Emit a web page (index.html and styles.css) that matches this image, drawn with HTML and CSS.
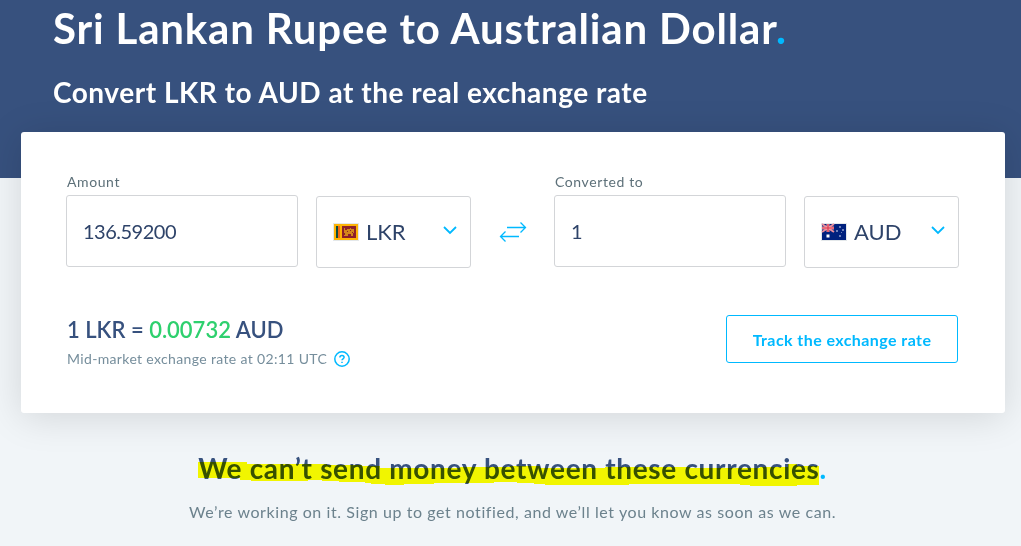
FILE: index.html
```html
<!DOCTYPE html>
<html lang="en">
<head>
<meta charset="utf-8">
<title>Sri Lankan Rupee to Australian Dollar</title>
<link rel="stylesheet" href="styles.css">
</head>
<body>
<header class="hero">
  <h1 class="hero-title">Sri Lankan Rupee to Australian Dollar<span class="dot">.</span></h1>
  <h2 class="hero-subtitle">Convert LKR to AUD at the real exchange rate</h2>
</header>
<main class="card">
  <div class="converter">
    <div class="field">
      <label class="label">Amount</label>
      <div class="input">136.59200</div>
    </div>
    <div class="select">
      <svg class="flag" viewBox="0 0 26 18" width="26" height="18">
        <rect width="26" height="18" fill="#e4e8ea"/>
        <rect x="1" y="1" width="24" height="16" fill="#fdb405"/>
        <rect x="3" y="3" width="2" height="12" fill="#0b4d40"/>
        <rect x="5" y="3" width="2" height="12" fill="#f26a12"/>
        <rect x="9" y="3" width="14" height="12" fill="#8d2029"/>
        <path d="M11 5h1v2h2v-1h3v-1h1v1h3v4h-1v3h-2v-2h-3v2h-4v-1h1v-2h-1z" fill="#d3871a"/>
        <path d="M14 8h1v1h-1zM17 7h1v1h-1zM19 9h1v1h-1z" fill="#8d2029"/>
      </svg>
      <span class="code">LKR</span>
      <svg class="chevron" viewBox="0 0 14 9" width="14" height="9"><path d="M1 1l6 6 6-6"/></svg>
    </div>
    <svg class="swap" viewBox="0 0 28 20" width="28" height="20"><path d="M8 5.500h18.500M21.500.5l5 5-5 5M20 14.500H1.500M6.500 9.500l-5 5 5 5"/></svg>
    <div class="field">
      <label class="label">Converted to</label>
      <div class="input">1</div>
    </div>
    <div class="select">
      <svg class="flag" viewBox="0 0 26 18" width="26" height="18">
        <rect width="26" height="18" fill="#e4e8ea"/>
        <rect x="1" y="1" width="24" height="16" fill="#00217e"/>
        <path d="M1 1l12 8M13 1L1 9" stroke="#e88d9c" stroke-width="2"/>
        <path d="M7 1v8M1 5h12" stroke="#f09aa4" stroke-width="3"/>
        <path d="M7 1v8M1 5h12" stroke="#e0384e" stroke-width="1.200"/>
        <rect x="5.500" y="11.500" width="3" height="3" fill="#fff"/>
        <path d="M18 3h2v2h-2zM15 7h2v2h-2zM21 6h2v2h-2zM18 12h2v2h-2zM20 9h1v1h-1z" fill="#6d80b8"/>
      </svg>
      <span class="code">AUD</span>
      <svg class="chevron" viewBox="0 0 14 9" width="14" height="9"><path d="M1 1l6 6 6-6"/></svg>
    </div>
  </div>
  <div class="summary">
    <div class="rate">
      <p class="rate-value">1 LKR = <span class="green">0.00732</span> AUD</p>
      <p class="rate-note">Mid-market exchange rate at 02:11 UTC
        <svg class="help" viewBox="0 0 16 16" width="16" height="16"><circle cx="8" cy="8" r="7.200"/><path d="M5.900 6.500C5.900 5.200 6.800 4.400 8 4.400s2.100.800 2.100 1.900c0 1.500-2.100 1.500-2.100 3M8 10.700v1.400"/></svg>
      </p>
    </div>
    <button class="track">Track the exchange rate</button>
  </div>
</main>
<section class="notice">
  <h3 class="notice-title"><span class="marked">We can’t send money between these currencies<span class="dot">.</span>
    <svg class="marker" viewBox="198 460 622 28" width="622" height="28"><path d="M198 462H247V464H327V465H362V466H380V468H460V467H510V466H540V468H605V467H690V468H760V467H788V464H797V466H819V485H797V486H750V485H740V484H629V485H545V484H534V483H517V482H494V483H434V484H404V485H385V484H371V483H365V482H339V481H322V480H308V481H251V480H240V478H198Z"/></svg></span></h3>
  <p class="notice-text">We’re working on it. Sign up to get notified, and we’ll let you know as soon as we can.</p>
</section>
</body>
</html>
```
FILE: styles.css
```css
* { box-sizing: border-box; }
body { margin: 0; background: #f1f5f8; font-family: Lato, "Liberation Sans", sans-serif; color: #37517e; }
h1, h2, h3, p { margin: 0; }
.dot { color: #00b9ff; }
.hero { height: 178px; padding: 2px 53px 0; background: #37517e; color: #fff; }
.hero-title { font-size: 42px; line-height: 52px; font-weight: 700; letter-spacing: .83px; white-space: nowrap; }
.hero-subtitle { margin-top: 21px; font-size: 28px; line-height: 34px; font-weight: 700; letter-spacing: .53px; }
.card { position: relative; width: 984px; height: 281px; margin: -46px 0 0 21px; padding: 41px 46px 0 45px; background: #fff; border-radius: 3px; box-shadow: 0 4px 38px rgba(0, 0, 0, .13); }
.converter { display: flex; align-items: flex-end; }
.field { width: 232px; }
.label { display: block; height: 22px; padding-left: 1px; font-size: 14px; line-height: 18px; letter-spacing: .6px; color: #5d7079; }
.input { height: 72px; padding: 0 16px; border: 1px solid #d3d5d8; border-radius: 3px; font-size: 20px; line-height: 70px; letter-spacing: -.5px; color: #2e4369; }
.select { display: flex; align-items: center; width: 155px; height: 72px; margin: 0 0 -1px 18px; padding: 0 13px 0 16px; border: 1px solid #d3d5d8; border-radius: 3px; color: #2e4369; font-size: 22px; }
.code { margin: 0 0 2px 7px; }
.chevron { margin: 0 0 4px auto; fill: none; stroke: #00b9ff; stroke-width: 1.8; }
.swap { margin: 0 27px 25px 28px; fill: none; stroke: #00b9ff; stroke-width: 1.3; }
.summary { display: flex; justify-content: space-between; margin-top: 48px; }
.rate { padding: 1px 0 0 1px; }
.rate-value { font-size: 22px; line-height: 28px; font-weight: 600; }
.green { color: #2ed06e; }
.rate-note { display: flex; align-items: center; margin-top: 5px; font-size: 14px; line-height: 20px; letter-spacing: .35px; color: #768e9c; }
.help { margin-left: 7px; fill: none; stroke: #00b9ff; stroke-width: 1.5; }
.track { width: 232px; height: 48px; margin-right: 1px; padding: 0; border: 1px solid #00b9ff; border-radius: 3px; background: #fff; color: #00b9ff; font: 700 16px Lato, sans-serif; letter-spacing: .43px; }
.notice { padding: 37px 0 0 4px; text-align: center; }
.notice-title { font-size: 28px; font-weight: 700; line-height: 36px; letter-spacing: .67px; }
.marked { position: relative; display: inline-block; }
.marker { position: absolute; left: 0; top: 10px; fill: #ff0; mix-blend-mode: multiply; }
.notice-text { margin-top: 14px; font-size: 16px; line-height: 24px; letter-spacing: .58px; color: #6c828d; }
```
